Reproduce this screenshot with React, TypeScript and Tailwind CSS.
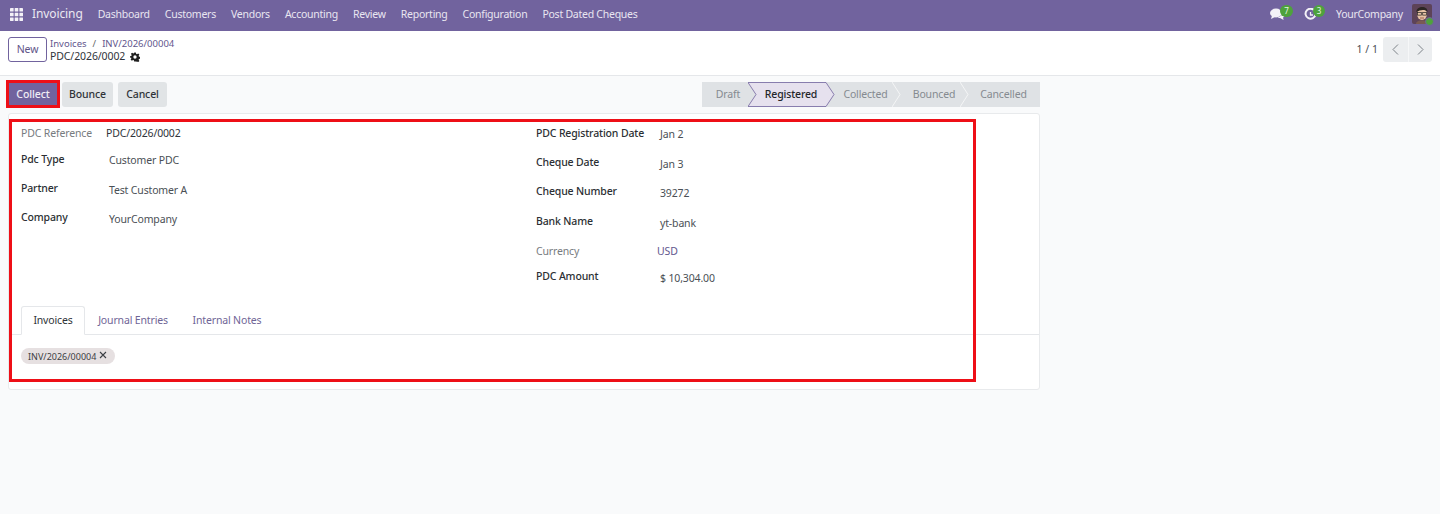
import React from "react";

function NavItem({ children }: { children: React.ReactNode }) {
  return <span className="text-[10.5px] leading-none tracking-[-0.25px] text-[#e9e6f1]">{children}</span>;
}

function Left({ label, value, h, vp }: { label: string; value: string; h: string; vp: string }) {
  return (
    <div className={`flex ${h}`}>
      <div className="w-[88px] pt-[4px] text-[10.5px] leading-[14px] font-medium tracking-[-0.15px] text-[#2b2f33]">{label}</div>
      <div className={`${vp} text-[10.5px] leading-[14px] tracking-[-0.15px] text-[#4a4f55]`}>{value}</div>
    </div>
  );
}

function Right({ label, value, h, vp }: { label: string; value: string; h: string; vp: string }) {
  return (
    <div className={`flex ${h}`}>
      <div className="w-[124px] pt-[1px] text-[10.5px] leading-[14px] font-medium tracking-[-0.15px] text-[#2b2f33]">{label}</div>
      <div className={`${vp} text-[10.5px] leading-[14px] tracking-[-0.15px] text-[#4a4f55]`}>{value}</div>
    </div>
  );
}

function Stage({ label, w, pad, active, first }: { label: string; w: string; pad: string; active?: boolean; first?: boolean }) {
  return (
    <div className={`relative flex h-full items-center justify-center ${w} ${pad} ${active ? "z-10" : ""}`}>
      {!first && !active && (
        <svg className="absolute left-[-7px] top-0 h-[25px] w-[9px]" viewBox="0 0 9 25" fill="none">
          <path d="M0 0 L8 12.5 L0 25" stroke="#f4f5f6" strokeWidth="1" />
        </svg>
      )}
      {active && (
        <svg className="absolute left-0 top-0 h-[25px] w-[87px]" viewBox="0 0 87 25" fill="none">
          <path d="M0 0.5 H78 L86 12.5 L78 24.5 H0 L8 12.5 Z" fill="#e6e1ee" stroke="#71639e" strokeWidth="0.8" />
        </svg>
      )}
      <span className={`relative text-[10.5px] tracking-[-0.15px] ${active ? "font-medium text-[#23262a]" : "text-[#858a90]"}`}>{label}</span>
    </div>
  );
}

export default function App() {
  return (
    <div className="relative h-[514px] w-[1440px] overflow-hidden bg-[#f9fafb] font-['Noto_Sans','Open_Sans',sans-serif]">
      {/* Navbar */}
      <header className="flex h-[31px] items-center justify-between bg-[#71639e] pb-[3px] pl-[10px] pr-[8px]">
        <div className="flex items-center">
          <svg width="13" height="13" viewBox="0 0 13 13" fill="#f3f1f7">
            {[0, 4.7, 9.4].flatMap((y) =>
              [0, 4.7, 9.4].map((x) => <rect key={`${x}-${y}`} x={x} y={y} width="3.6" height="3.6" rx="0.4" />)
            )}
          </svg>
          <span className="ml-[9px] mr-[15px] text-[12px] leading-none tracking-[-0.1px] text-[#ebe8f2]">Invoicing</span>
          <div className="flex items-center gap-[15px]">
            <NavItem>Dashboard</NavItem>
            <NavItem>Customers</NavItem>
            <NavItem>Vendors</NavItem>
            <NavItem>Accounting</NavItem>
            <NavItem>Review</NavItem>
            <NavItem>Reporting</NavItem>
            <NavItem>Configuration</NavItem>
            <NavItem>Post Dated Cheques</NavItem>
          </div>
        </div>
        <div className="flex items-center">
          <div className="relative mr-[20px] h-[13px] w-[14px]">
            <svg width="15" height="13" viewBox="0 0 15 13" fill="#f3f1f7">
              <ellipse cx="6" cy="5" rx="6" ry="4.4" />
              <path d="M2 7.5 L1 11 L6 8.5 Z" />
              <path d="M11.5 3.5 C14 4 15 5.5 14.6 7.4 C14.3 8.6 13.6 9.2 13 9.6 L13.6 12 L10 10 L7.5 10 L12 7 Z" />
            </svg>
            <span className="absolute left-[10px] top-[-3px] flex h-[12px] w-[13px] items-center justify-center rounded-full bg-[#4ea23c] text-[8px] leading-none text-[#e8f5e4]">7</span>
          </div>
          <div className="relative mr-[18px] h-[13px] w-[14px]">
            <svg width="13" height="13" viewBox="0 0 13 13" fill="none" stroke="#f3f1f7" strokeWidth="2">
              <path d="M10.8 3 A5 5 0 1 0 11.5 6.5" />
              <path d="M6.5 4 V7 H9" strokeWidth="1.3" />
            </svg>
            <span className="absolute left-[9px] top-[-3px] flex h-[12px] w-[12px] items-center justify-center rounded-full bg-[#4ea23c] text-[8px] leading-none text-[#e8f5e4]">3</span>
          </div>
          <span className="mr-[10px] w-[66px] whitespace-nowrap text-[10.5px] leading-none tracking-[-0.25px] text-[#e9e6f1]">YourCompany</span>
          <div className="relative h-[20px] w-[20px]">
            <svg width="20" height="20" viewBox="0 0 20 20">
              <rect width="20" height="20" rx="2" fill="#5d4358" />
              <path d="M4 20 C4 15 16 15 16 20 Z" fill="#7a5a52" />
              <ellipse cx="10" cy="10" rx="5" ry="6" fill="#e8c4a6" />
              <path d="M4.5 8 C4 2 16 1 15.5 8 C13 5 8 6 4.5 8 Z" fill="#2c2624" />
              <rect x="5.5" y="8.5" width="3.8" height="2.6" fill="none" stroke="#222" strokeWidth="0.7" />
              <rect x="10.7" y="8.5" width="3.8" height="2.6" fill="none" stroke="#222" strokeWidth="0.7" />
              <path d="M8 14 H12" stroke="#8a4a3c" strokeWidth="0.8" />
            </svg>
            <span className="absolute bottom-[-2px] right-[-2px] h-[9px] w-[9px] rounded-full border border-[#71639e] bg-[#4ea23c]" />
          </div>
        </div>
      </header>

      {/* Control panel */}
      <div className="flex h-[45px] items-start justify-between border-b border-[#e5e7ea] bg-white pl-[8px] pr-[8px] pt-[6px]">
        <div className="flex items-start">
          <button className="flex h-[25px] w-[39px] items-center justify-center rounded-[3px] border border-[#71639e] bg-white text-[10.5px] tracking-[-0.1px] text-[#5f5488]">New</button>
          <div className="ml-[3px] flex flex-col pt-[1px]">
            <div className="flex items-center text-[9.5px] leading-[12px] text-[#62568d]">
              <span>Invoices</span>
              <span className="mx-[6px] text-[#666]">/</span>
              <span>INV/2026/00004</span>
            </div>
            <div className="flex items-center text-[10.5px] leading-[13px] tracking-[-0.1px] text-[#30343a]">
              <span>PDC/2026/0002</span>
              <svg className="ml-[5px]" width="10" height="10" viewBox="0 0 24 24" fill="#1f1f1f">
                <path fillRule="evenodd" d="M10 1h4l.7 3.2 2 .9L19.6 3.3l2.9 2.9-1.8 2.9.9 2 3.2.7v4l-3.2.7-.9 2 1.8 2.9-2.9 2.9-2.9-1.8-2 .9L14 23h-4l-.7-3.2-2-.9-2.9 1.8-2.9-2.9 1.8-2.9-.9-2L-.1 14v-4l3.2-.7.9-2-1.8-2.9 2.9-2.9 2.9 1.8 2-.9L10 1ZM12 8a4 4 0 1 0 0 8 4 4 0 0 0 0-8Z" />
              </svg>
            </div>
          </div>
        </div>
        <div className="flex items-center">
          <span className="mr-[5px] text-[10.5px] text-[#4a4f55]">1 / 1</span>
          <div className="flex h-[25px] w-[49px] items-center rounded-[3px] bg-[#eceef0]">
            <div className="flex h-full w-1/2 items-center justify-center">
              <svg width="7" height="11" viewBox="0 0 7 11" fill="none" stroke="#7d8288" strokeWidth="1"><path d="M6 0.5 L1 5.5 L6 10.5" /></svg>
            </div>
            <div className="flex h-full w-1/2 items-center justify-center border-l border-[#f6f7f8]">
              <svg width="7" height="11" viewBox="0 0 7 11" fill="none" stroke="#7d8288" strokeWidth="1"><path d="M1 0.5 L6 5.5 L1 10.5" /></svg>
            </div>
          </div>
        </div>
      </div>

      {/* Form area */}
      <div className="ml-[8px] w-[1032px]">
        <div className="mt-[6px] flex h-[25px] items-center justify-between">
          <div className="flex items-center">
            <button className="flex h-[25px] w-[50px] items-center justify-center rounded-[3px] bg-[#71639e] text-[10.5px] font-medium tracking-[-0.1px] text-[#f0eef5]">Collect</button>
            <button className="ml-[4px] flex h-[25px] w-[51px] items-center justify-center rounded-[3px] bg-[#e1e4e6] text-[10.5px] font-medium tracking-[-0.1px] text-[#2f3338]">Bounce</button>
            <button className="ml-[5px] flex h-[25px] w-[49px] items-center justify-center rounded-[3px] bg-[#e1e4e6] text-[10.5px] font-medium tracking-[-0.1px] text-[#2f3338]">Cancel</button>
          </div>
          <div className="flex h-[25px] w-[338px] bg-[#dfe2e5]">
            <Stage label="Draft" w="w-[46px]" pad="pl-[6px]" first />
            <Stage label="Registered" w="w-[82px]" pad="pl-[4px]" active />
            <Stage label="Collected" w="w-[69px]" pad="pl-[2px]" />
            <Stage label="Bounced" w="w-[68px]" pad="pl-[2px]" />
            <Stage label="Cancelled" w="w-[73px]" pad="pl-0" />
          </div>
        </div>

        {/* Card */}
        <div className="mt-[6px] h-[277px] rounded-[3px] border border-[#e8eaec] bg-white">
          <div className="flex h-[192px] px-[12px] pt-[11px]">
            <div className="w-[515px]">
              <div className="flex h-[23px]">
                <div className="w-[85px] pt-[1px] text-[10.5px] leading-[14px] tracking-[-0.15px] text-[#777b80]">PDC Reference</div>
                <div className="pt-[1px] text-[10.5px] leading-[14px] tracking-[-0.15px] text-[#30343a]">PDC/2026/0002</div>
              </div>
              <Left label="Pdc Type" value="Customer PDC" h="h-[29px]" vp="pt-[5px]" />
              <Left label="Partner" value="Test Customer A" h="h-[29px]" vp="pt-[6px]" />
              <Left label="Company" value="YourCompany" h="h-[29px]" vp="pt-[6px]" />
            </div>
            <div className="flex-1">
              <Right label="PDC Registration Date" value="Jan 2" h="h-[29px]" vp="pt-[2px]" />
              <Right label="Cheque Date" value="Jan 3" h="h-[29px]" vp="pt-[3px]" />
              <Right label="Cheque Number" value="39272" h="h-[30px]" vp="pt-[3px]" />
              <Right label="Bank Name" value="yt-bank" h="h-[25px]" vp="pt-[3px]" />
              <div className="flex h-[30px]">
                <div className="w-[121px] pt-[6px] text-[10.5px] leading-[14px] tracking-[-0.15px] text-[#777b80]">Currency</div>
                <div className="pt-[6px] text-[10.5px] leading-[14px] tracking-[-0.15px] text-[#62568d]">USD</div>
              </div>
              <Right label="PDC Amount" value="$ 10,304.00" h="h-[28px]" vp="pt-[3px]" />
            </div>
          </div>

          {/* Tabs */}
          <div className="flex h-[29px] items-end border-b border-[#e5e7ea] pl-[12px]">
            <div className="relative top-[1px] flex h-[29px] w-[64px] items-center justify-center rounded-t-[3px] border border-[#e5e7ea] border-b-white bg-white text-[10.5px] tracking-[-0.15px] text-[#2f3338]">Invoices</div>
            <div className="flex h-[29px] w-[96px] items-center justify-center pt-[2px] text-[10.5px] tracking-[-0.15px] text-[#6f6596]">Journal Entries</div>
            <div className="flex h-[29px] w-[92px] items-center justify-center pt-[2px] text-[10.5px] tracking-[-0.15px] text-[#6f6596]">Internal Notes</div>
          </div>
          <div className="flex pl-[12px] pt-[13px]">
            <span className="flex h-[16px] w-[94px] items-center rounded-full bg-[#e6e0e1] pl-[7px] text-[9px] leading-none text-[#3c3f44]">
              INV/2026/00004
              <svg className="-mt-[2px] ml-[3px]" width="8" height="8" viewBox="0 0 8 8" stroke="#3c3f44" strokeWidth="1.1"><path d="M1 1 L7 7 M7 1 L1 7" /></svg>
            </span>
          </div>
        </div>
      </div>

      {/* Red annotation rectangles */}
      <div className="absolute left-[6px] top-[80px] h-[28px] w-[54px] border-[3px] border-[#ee0f17]" />
      <div className="absolute left-[9px] top-[119px] h-[263px] w-[967px] border-[3px] border-[#ee0f17]" />
    </div>
  );
}
